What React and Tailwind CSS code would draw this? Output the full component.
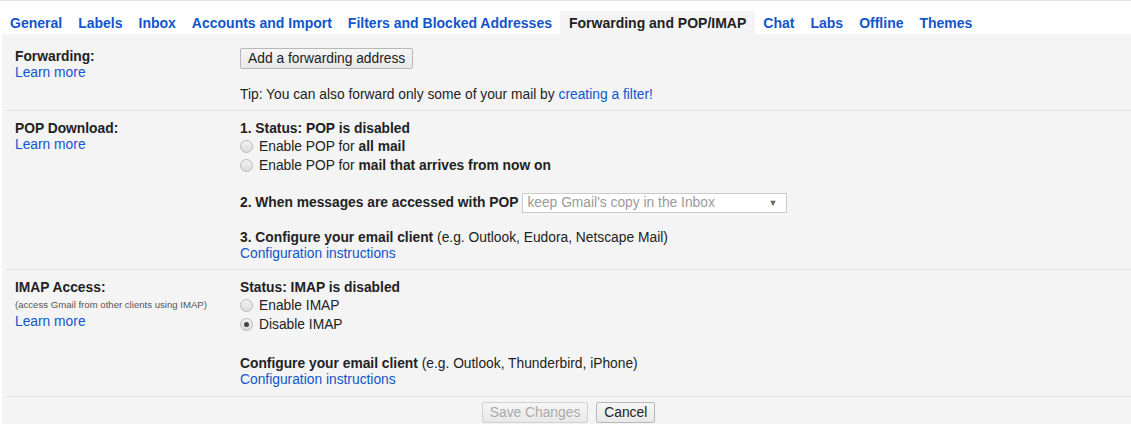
import React from 'react';

const tabs = [
  'General',
  'Labels',
  'Inbox',
  'Accounts and Import',
  'Filters and Blocked Addresses',
  'Forwarding and POP/IMAP',
  'Chat',
  'Labs',
  'Offline',
  'Themes',
];

function Radio({ checked, children }) {
  return (
    <label className="flex items-center h-[19px] gap-[6px]">
      <span className="w-[13px] h-[13px] rounded-full border border-[#b9b9b9] bg-gradient-to-b from-[#f2f2f2] to-[#dcdcdc] flex items-center justify-center shrink-0">
        {checked && <span className="w-[5px] h-[5px] rounded-full bg-[#444]" />}
      </span>
      <span>{children}</span>
    </label>
  );
}

function Btn({ disabled, children }) {
  return (
    <button
      className={
        'h-[21px] px-[7px] rounded-[2px] border bg-gradient-to-b from-[#f6f6f6] to-[#e8e8e8] leading-none ' +
        (disabled ? 'border-[#d0d0d0] text-[#aaaaaa]' : 'border-[#b8b8b8] text-[#222]')
      }
    >
      {children}
    </button>
  );
}

function Row({ label, children, className }) {
  return (
    <div className={'flex border-b border-[#e3e3e3] ' + className}>
      <div className="w-[234px] pl-[9px] shrink-0">{label}</div>
      <div className="flex-1">{children}</div>
    </div>
  );
}

const link = 'text-[#1155cc]';

export default function App() {
  return (
    <div
      className="w-[1131px] h-[424px] overflow-hidden bg-white text-[13.8px] leading-[16px] text-[#222]"
      style={{ fontFamily: '"Liberation Sans", Arial, sans-serif' }}
    >
      {/* ── Tab bar ── */}
      <div className="border-t border-[#e5e5e5] pt-[10px] pl-[2px] flex text-[14px]">
        {tabs.map((t) => {
          const active = t === 'Forwarding and POP/IMAP';
          return (
            <div
              key={t}
              className={
                'h-[23px] flex items-center font-bold ' +
                (active ? 'px-[9px] bg-[#f4f4f4] text-[#222]' : 'px-[8px] text-[#1155cc]')
              }
            >
              {t}
            </div>
          );
        })}
      </div>

      {/* ── Settings body ── */}
      <div className="ml-[2px] bg-[#f4f4f4] h-full">
        <div className="ml-[4px]">
          {/* Forwarding */}
          <Row
            className="pt-[14px] pb-[7px]"
            label={
              <div className="pt-[1px]">
                <div className="font-bold">Forwarding:</div>
                <div className={link}>Learn more</div>
              </div>
            }
          >
            <Btn>Add a forwarding address</Btn>
            <div className="mt-[18px]">
              Tip: You can also forward only some of your mail by{' '}
              <span className={link}>creating a filter!</span>
            </div>
          </Row>

          {/* POP */}
          <Row
            className="pt-[10px] pb-[7px]"
            label={
              <div>
                <div className="font-bold">POP Download:</div>
                <div className={link}>Learn more</div>
              </div>
            }
          >
            <div className="font-bold">1. Status: POP is disabled</div>
            <Radio>
              Enable POP for <b>all mail</b>
            </Radio>
            <Radio>
              Enable POP for <b>mail that arrives from now on</b>
            </Radio>
            <div className="mt-[18px] flex items-center gap-[4px]">
              <span className="font-bold">2. When messages are accessed with POP</span>
              <div className="w-[265px] h-[20px] bg-white border border-[#cccccc] flex items-center justify-between pl-[4px] pr-[9px] text-[#9a9a9a]">
                <span>keep Gmail's copy in the Inbox</span>
                <span className="text-[9px] text-[#666]">▼</span>
              </div>
            </div>
            <div className="mt-[17px]">
              <b>3. Configure your email client</b> (e.g. Outlook, Eudora, Netscape Mail)
            </div>
            <div className={link}>Configuration instructions</div>
          </Row>

          {/* IMAP */}
          <Row
            className="pt-[10px] pb-[8px]"
            label={
              <div>
                <div className="font-bold">IMAP Access:</div>
                <div className="text-[9.6px] leading-[18px] text-[#555]">
                  (access Gmail from other clients using IMAP)
                </div>
                <div className={link}>Learn more</div>
              </div>
            }
          >
            <div className="font-bold">Status: IMAP is disabled</div>
            <Radio>Enable IMAP</Radio>
            <Radio checked>Disable IMAP</Radio>
            <div className="mt-[22px]">
              <b>Configure your email client</b> (e.g. Outlook, Thunderbird, iPhone)
            </div>
            <div className={link}>Configuration instructions</div>
          </Row>

          {/* Actions */}
          <div className="flex justify-center gap-[8px] pt-[5px]">
            <Btn disabled>Save Changes</Btn>
            <Btn>Cancel</Btn>
          </div>
        </div>
      </div>
    </div>
  );
}
